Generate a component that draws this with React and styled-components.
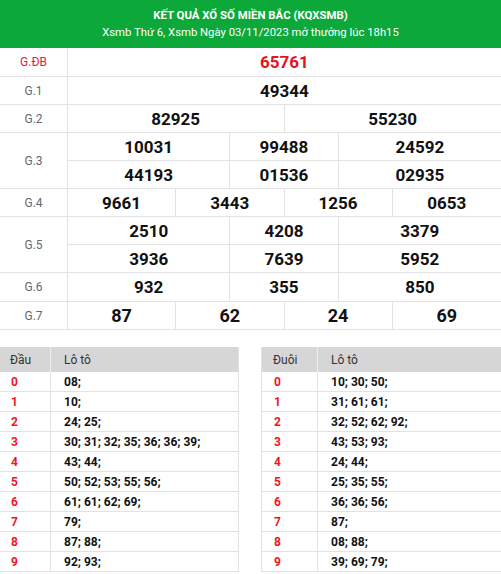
import React from "react";
import styled, { createGlobalStyle } from "styled-components";

const GlobalStyle = createGlobalStyle`
  body {
    margin: 0;
    background: #fff;
    font-family: Roboto, "Liberation Sans", Arial, sans-serif;
  }
`;

const Page = styled.div`
  width: 501px;
  background: #fff;
`;

const Header = styled.div`
  background: #0ca83a;
  color: #fff;
  height: 48px;
  display: flex;
  flex-direction: column;
  align-items: center;
  justify-content: center;
  gap: 4px;
`;

const Title = styled.div`
  font-size: 11.4px;
  font-weight: 700;
  line-height: 14px;
`;

const Sub = styled.div`
  font-size: 11.3px;
  line-height: 14px;
`;

const Results = styled.div`
  display: flex;
  flex-direction: column;
`;

const Row = styled.div`
  display: grid;
  grid-template-columns: 68px 1fr;
  border-bottom: 1px solid #e2e2e2;
`;

const Label = styled.div`
  display: flex;
  align-items: center;
  justify-content: center;
  font-size: 12px;
  color: ${({ $special }) => ($special ? "#e8194a" : "#666")};
  border-right: 1px solid #e2e2e2;
`;

const Values = styled.div`
  display: grid;
  grid-template-columns: ${({ $cols }) => $cols};
`;

const Num = styled.div`
  height: ${({ $h }) => $h}px;
  display: flex;
  align-items: center;
  justify-content: center;
  font-size: ${({ $big }) => ($big ? "18px" : "17px")};
  font-weight: 700;
  color: ${({ $red }) => ($red ? "#e3141f" : "#111")};
  border-right: 1px solid #e2e2e2;
  &:nth-child(${({ $n }) => $n}n) {
    border-right: none;
  }
  &:nth-child(n + ${({ $n }) => $n + 1}) {
    border-top: 1px solid #e2e2e2;
  }
`;

const prizes = [
  { label: "G.ĐB", cols: "1fr", nums: ["65761"], special: true, h: 28 },
  { label: "G.1", cols: "1fr", nums: ["49344"] },
  { label: "G.2", cols: "1fr 1fr", nums: ["82925", "55230"] },
  { label: "G.3", cols: "3fr 2fr 3fr", nums: ["10031", "99488", "24592", "44193", "01536", "02935"] },
  { label: "G.4", cols: "1fr 1fr 1fr 1fr", nums: ["9661", "3443", "1256", "0653"] },
  { label: "G.5", cols: "3fr 2fr 3fr", nums: ["2510", "4208", "3379", "3936", "7639", "5952"] },
  { label: "G.6", cols: "3fr 2fr 3fr", nums: ["932", "355", "850"], h: 28 },
  { label: "G.7", cols: "1fr 1fr 1fr 1fr", nums: ["87", "62", "24", "69"], big: true },
];

const LotoWrap = styled.div`
  display: flex;
  justify-content: space-between;
  margin-top: 17px;
`;

const Loto = styled.div`
  width: ${({ $w }) => $w}px;
  border-left: ${({ $edge }) => ($edge === "left" ? "1px solid #e2e2e2" : "none")};
  border-right: ${({ $edge }) => ($edge === "right" ? "1px solid #e2e2e2" : "none")};
`;

const LotoRow = styled.div`
  display: grid;
  grid-template-columns: ${({ $first }) => $first}px 1fr;
  height: ${({ $head }) => ($head ? "25px" : "19px")};
  background: ${({ $head }) => ($head ? "#d6d6d6" : "#fff")};
  border-bottom: ${({ $head }) => ($head ? "none" : "1px solid #e2e2e2")};
  font-size: 12px;
  font-weight: ${({ $head }) => ($head ? 400 : 700)};
  color: ${({ $head }) => ($head ? "#333" : "#111")};
`;

const Cell = styled.div`
  display: flex;
  align-items: center;
  padding-left: ${({ $pad }) => $pad}px;
  color: ${({ $red }) => ($red ? "#f2141e" : "inherit")};
  border-right: ${({ $divider, $head }) =>
    $divider ? `1px solid ${$head ? "#ececec" : "#e2e2e2"}` : "none"};
`;

const dau = [
  "08;", "10;", "24; 25;", "30; 31; 32; 35; 36; 36; 39;", "43; 44;",
  "50; 52; 53; 55; 56;", "61; 61; 62; 69;", "79;", "87; 88;", "92; 93;",
];
const duoi = [
  "10; 30; 50;", "31; 61; 61;", "32; 52; 62; 92;", "43; 53; 93;", "24; 44;",
  "25; 35; 55;", "36; 36; 56;", "87;", "08; 88;", "39; 69; 79;",
];

const LotoTable = ({ title, rows, width, first, pad, edge }) => (
  <Loto $w={width} $edge={edge}>
    <LotoRow $head $first={first}>
      <Cell $pad={pad} $divider $head>{title}</Cell>
      <Cell $pad={13}>Lô tô</Cell>
    </LotoRow>
    {rows.map((r, i) => (
      <LotoRow key={i} $first={first}>
        <Cell $pad={pad + 1} $red $divider>{i}</Cell>
        <Cell $pad={13}>{r}</Cell>
      </LotoRow>
    ))}
  </Loto>
);

export default function App() {
  return (
    <Page>
      <GlobalStyle />
      <Header>
        <Title>KẾT QUẢ XỔ SỐ MIỀN BẮC (KQXSMB)</Title>
        <Sub>Xsmb Thứ 6, Xsmb Ngày 03/11/2023 mở thưởng lúc 18h15</Sub>
      </Header>
      <Results>
        {prizes.map((p) => {
          const n = p.cols.split(" ").length;
          return (
            <Row key={p.label}>
              <Label $special={p.special}>{p.label}</Label>
              <Values $cols={p.cols}>
                {p.nums.map((v, i) => (
                  <Num key={i} $n={n} $h={p.h || 27} $red={p.special} $big={p.big}>
                    {v}
                  </Num>
                ))}
              </Values>
            </Row>
          );
        })}
      </Results>
      <LotoWrap>
        <LotoTable title="Đầu" rows={dau} width={238} first={51} pad={10} edge="right" />
        <LotoTable title="Đuôi" rows={duoi} width={239} first={56} pad={11} edge="left" />
      </LotoWrap>
    </Page>
  );
}
